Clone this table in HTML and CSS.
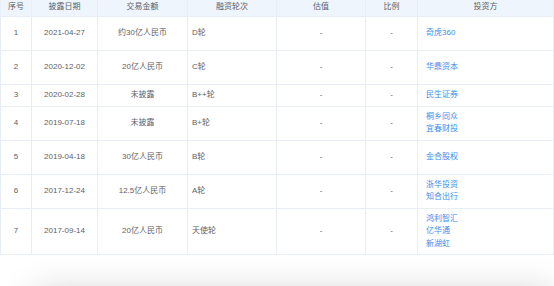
FILE: index.html
```html
<!DOCTYPE html>
<html lang="zh">
<head>
<meta charset="utf-8">
<link rel="stylesheet" href="styles.css">
</head>
<body>
<table class="fin">
  <colgroup>
    <col class="c-no"><col class="c-date"><col class="c-amt"><col class="c-round"><col class="c-val"><col class="c-ratio"><col class="c-inv">
  </colgroup>
  <thead>
    <tr><th>序号</th><th>披露日期</th><th>交易金额</th><th>融资轮次</th><th>估值</th><th>比例</th><th>投资方</th></tr>
  </thead>
  <tbody>
    <tr class="tall"><td>1</td><td>2021-04-27</td><td>约30亿人民币</td><td class="left">D轮</td><td>-</td><td>-</td><td class="inv"><a>奇虎360</a></td></tr>
    <tr class="tall"><td>2</td><td>2020-12-02</td><td>20亿人民币</td><td class="left">C轮</td><td>-</td><td>-</td><td class="inv"><a>华鼎资本</a></td></tr>
    <tr class="short"><td>3</td><td>2020-02-28</td><td>未披露</td><td class="left">B++轮</td><td>-</td><td>-</td><td class="inv"><a>民生证券</a></td></tr>
    <tr class="tall"><td>4</td><td>2019-07-18</td><td>未披露</td><td class="left">B+轮</td><td>-</td><td>-</td><td class="inv"><a>桐乡同众</a><a>宜春财投</a></td></tr>
    <tr class="tall"><td>5</td><td>2019-04-18</td><td>30亿人民币</td><td class="left">B轮</td><td>-</td><td>-</td><td class="inv"><a>金合股权</a></td></tr>
    <tr class="tall"><td>6</td><td>2017-12-24</td><td>12.5亿人民币</td><td class="left">A轮</td><td>-</td><td>-</td><td class="inv"><a>浙华投资</a><a>知合出行</a></td></tr>
    <tr><td>7</td><td>2017-09-14</td><td>20亿人民币</td><td class="left">天使轮</td><td>-</td><td>-</td><td class="inv"><a>鸿利智汇</a><a>亿华通</a><a>新湖虹</a></td></tr>
  </tbody>
</table>
<div class="next-card"></div>
</body>
</html>
```

FILE: styles.css
```css
html, body {
  margin: 0;
  padding: 0;
  background: #ffffff;
}
body {
  font-family: "Liberation Sans", "Noto Sans CJK SC", sans-serif;
  font-size: 8px;
  color: #5f6166;
  overflow: hidden;
}
.fin {
  width: 554px;
  table-layout: fixed;
  border-collapse: collapse;
  border-left: 1px solid #e9eef5;
  border-right: 1px solid #e9eef5;
}
.c-no { width: 31px; }
.c-date { width: 66px; }
.c-amt { width: 90px; }
.c-round { width: 89px; }
.c-val { width: 89px; }
.c-ratio { width: 52px; }
.c-inv { width: 136px; }

.fin th {
  height: 16px;
  padding: 0;
  background: #eef5fd;
  font-weight: normal;
  color: #5f6166;
  text-align: center;
  vertical-align: top;
  line-height: 13px;
  border-left: 1px solid #e6eef8;
  border-bottom: 1px solid #e9eef5;
}
.fin td {
  padding: 4px 4px;
  text-align: center;
  vertical-align: middle;
  line-height: 12.5px;
  border: 1px solid #e9eef5;
  border-top: none;
}
.fin tr.tall td { height: 25px; }
.fin tr.short td { height: 12px; }
.fin td.left {
  text-align: left;
  padding-left: 4px;
}
.fin td.inv {
  text-align: left;
  padding-left: 8px;
}
.fin td.inv a {
  display: block;
  color: #3d8ef0;
  text-decoration: none;
}
.next-card {
  margin: 38px 0 0 34px;
  height: 60px;
  background: #ffffff;
  box-shadow: 0 0 36px rgba(0, 0, 0, 0.2);
}
```
